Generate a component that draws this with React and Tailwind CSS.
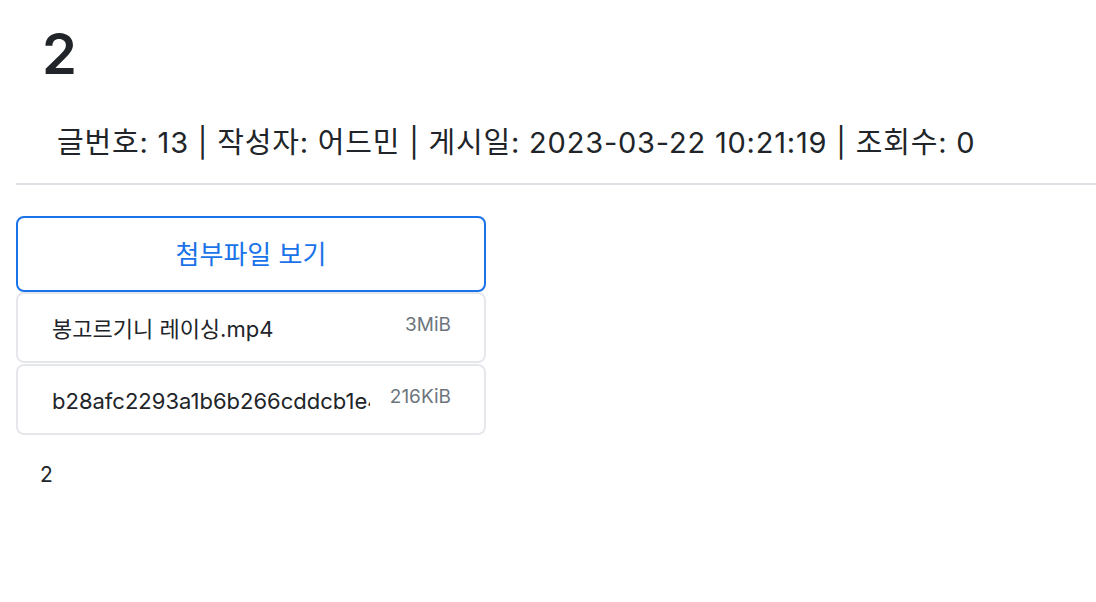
import React from 'react';

const files = [
  { name: '봉고르기니 레이싱.mp4', size: '3MiB' },
  { name: 'b28afc2293a1b6b266cddcb1e4f0a7c2.png', size: '216KiB' },
];

function FileItem({ name, size }) {
  return (
    <li className="flex items-start justify-between h-[71px] pl-[34px] pr-[33px] border-2 border-[#e5e7eb] rounded-lg">
      <span className="mt-[20px] text-[22px] leading-[30px] text-[#212529] whitespace-nowrap overflow-hidden w-[318px]">
        {name}
      </span>
      <span className="mt-[19px] text-[19px] leading-[24px] text-[#6c757d]">{size}</span>
    </li>
  );
}

export default function App() {
  return (
    <div className="bg-white min-h-[602px] pl-4 font-['Inter','Noto_Sans_CJK_KR',sans-serif] text-[#212529]">
      <h1 className="pl-[26px] pt-[20px] text-[56px] leading-[68px] font-semibold">2</h1>
      <div className="pl-[41px] mt-[35px] text-[29px] leading-[40px] tracking-[0.8px]">
        글번호: 13 | 작성자: 어드민 | 게시일: 2023-03-22 10:21:19 | 조회수: 0
      </div>
      <hr className="mt-[20px] border-0 h-[2px] bg-[#dee2e6]" />
      <div className="w-[470px] mt-[31px]">
        <button className="w-full h-[76px] border-2 border-[#1a73e8] rounded-lg text-[#1a73e8] text-[26px]">
          첨부파일 보기
        </button>
        <ul className="flex flex-col gap-[1px]">
          {files.map((f) => (
            <FileItem key={f.name} {...f} />
          ))}
        </ul>
      </div>
      <p className="pl-6 mt-[26px] text-[21px] leading-[28px]">2</p>
    </div>
  );
}
